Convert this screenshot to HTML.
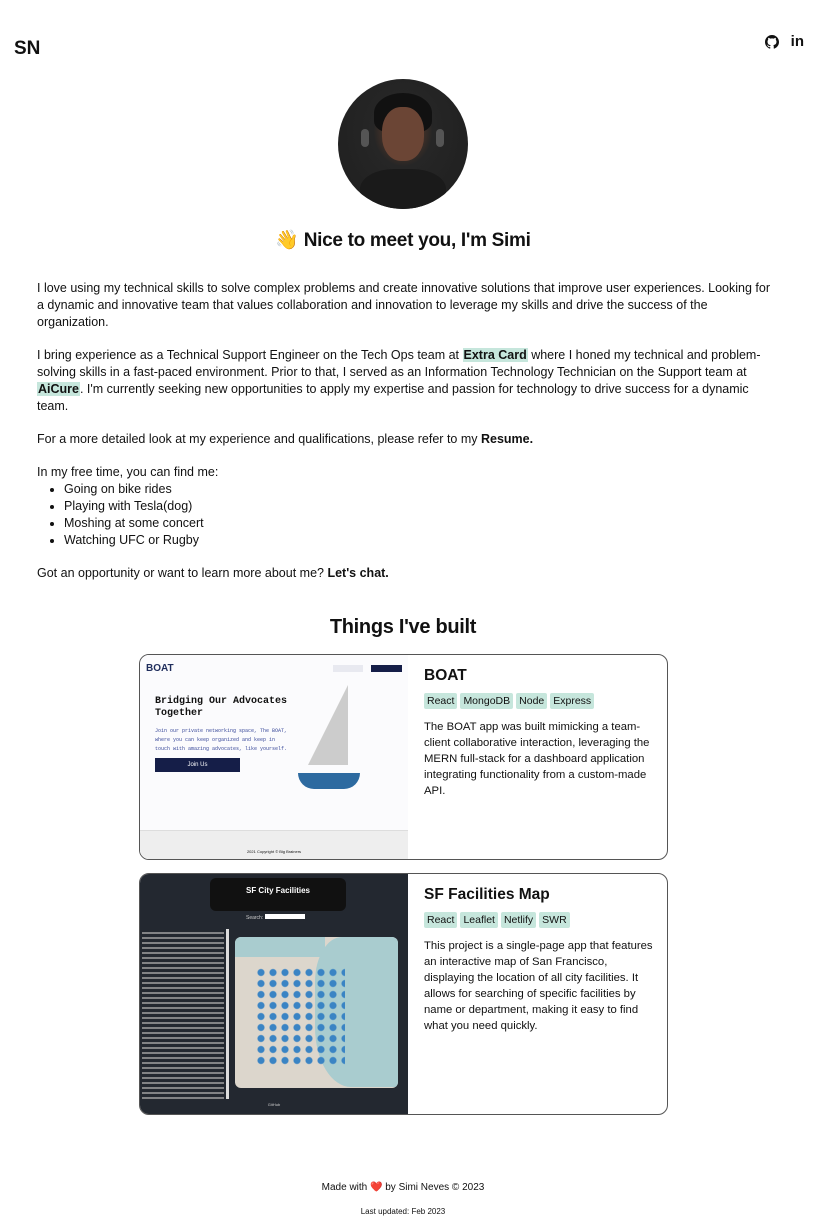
<!DOCTYPE html>
<html><head><meta charset="utf-8"><style>
*{box-sizing:border-box}
body{margin:0;width:820px;height:1230px;background:#fff;font-family:"Liberation Sans",sans-serif;color:#111;position:relative;overflow:hidden}
.logo{position:absolute;left:14px;top:38px;font-size:19px;font-weight:bold}
.icons{position:absolute;right:16px;top:33px;display:flex;gap:12px;align-items:center}
.avatar{position:absolute;left:338px;top:79px;width:130px;height:130px;border-radius:50%;background:radial-gradient(ellipse at 50% 40%,#6a4a3a 0,#4a3328 18%,#262626 32%,#1e1e1e 100%);overflow:hidden}
h1{position:absolute;left:0;width:806px;top:228px;margin:0;text-align:center;font-size:19px;font-weight:bold;letter-spacing:-0.3px}
.txt{position:absolute;left:37px;width:738px;top:280px;font-size:12.5px;line-height:17px}
.txt p{margin:0 0 16px}
.txt ul{margin:0 0 16px;padding-left:27px}
.hl{background:#c6e6dc;font-weight:bold;padding:0 1px}
h2{position:absolute;left:0;width:806px;top:616px;margin:0;text-align:center;font-size:20px;font-weight:bold;letter-spacing:-0.3px}
.card{position:absolute;left:139px;width:529px;border:1px solid #555;border-radius:10px;overflow:hidden;background:#fff}
.shot{position:absolute;left:0;top:0;bottom:0;width:268px}
.info{position:absolute;left:284px;top:12px;width:235px}
.info h3{margin:0 0 6px;font-size:15.5px}
.tags span{display:inline-block;background:#c6e6dc;font-size:10.5px;padding:2px 3px;border-radius:2px;margin-right:3px}
.info p{font-size:11.3px;line-height:16px;margin:10px 0 0}
.foot{position:absolute;left:0;width:806px;text-align:center}
</style></head><body>
<div class="logo">SN</div>
<div class="icons">
<svg width="14" height="14" viewBox="0 0 16 16"><path fill="#111" d="M8 0C3.6 0 0 3.6 0 8c0 3.5 2.3 6.5 5.5 7.6.4.1.5-.2.5-.4v-1.4c-2.2.5-2.7-1-2.7-1-.4-.9-.9-1.2-.9-1.2-.7-.5.1-.5.1-.5.8.1 1.2.8 1.2.8.7 1.2 1.9.9 2.3.7.1-.5.3-.9.5-1.1-1.8-.2-3.6-.9-3.6-4 0-.9.3-1.6.8-2.1-.1-.2-.4-1 .1-2.1 0 0 .7-.2 2.2.8.6-.2 1.3-.3 2-.3s1.4.1 2 .3c1.5-1 2.2-.8 2.2-.8.4 1.1.2 1.9.1 2.1.5.6.8 1.3.8 2.1 0 3.1-1.9 3.7-3.6 3.9.3.3.5.8.5 1.5v2.2c0 .2.1.5.6.4C13.7 14.5 16 11.5 16 8c0-4.4-3.6-8-8-8z"/></svg>
<span style="font-weight:bold;font-size:15px">in</span>
</div>
<div class="avatar">
<div style="position:absolute;left:36px;top:14px;width:58px;height:40px;border-radius:50% 50% 30% 30%;background:#111"></div>
<div style="position:absolute;left:44px;top:28px;width:42px;height:54px;border-radius:45%;background:#6b4535"></div>
<div style="position:absolute;left:22px;top:90px;width:86px;height:50px;border-radius:40% 40% 0 0;background:#1a1a1a"></div>
<div style="position:absolute;left:23px;top:50px;width:8px;height:18px;border-radius:4px;background:#555"></div>
<div style="position:absolute;left:98px;top:50px;width:8px;height:18px;border-radius:4px;background:#555"></div>
</div>
<h1>👋 Nice to meet you, I'm Simi</h1>
<div class="txt">
<p>I love using my technical skills to solve complex problems and create innovative solutions that improve user experiences. Looking for a dynamic and innovative team that values collaboration and innovation to leverage my skills and drive the success of the organization.</p>
<p>I bring experience as a Technical Support Engineer on the Tech Ops team at <span class="hl">Extra Card</span> where I honed my technical and problem-solving skills in a fast-paced environment. Prior to that, I served as an Information Technology Technician on the Support team at <span class="hl">AiCure</span>. I'm currently seeking new opportunities to apply my expertise and passion for technology to drive success for a dynamic team.</p>
<p>For a more detailed look at my experience and qualifications, please refer to my <b>Resume.</b></p>
<p style="margin:0">In my free time, you can find me:</p>
<ul><li>Going on bike rides</li><li>Playing with Tesla(dog)</li><li>Moshing at some concert</li><li>Watching UFC or Rugby</li></ul>
<p>Got an opportunity or want to learn more about me? <b>Let's chat.</b></p>
</div>
<h2>Things I've built</h2>
<div class="card" style="top:654px;height:206px">
<div class="shot" style="background:#fbfbfd">
<div style="position:absolute;left:6px;top:8px;font-weight:bold;font-size:10px;color:#1f2d5c">BOAT</div>
<div style="position:absolute;left:193px;top:10px;width:30px;height:7px;background:#e8e9f0"></div>
<div style="position:absolute;left:231px;top:10px;width:31px;height:7px;background:#151e48"></div>
<div style="position:absolute;left:15px;top:41px;font-family:'Liberation Mono',monospace;font-weight:bold;font-size:10px;line-height:12px">Bridging Our Advocates<br>Together</div>
<div style="position:absolute;left:15px;top:72px;font-family:'Liberation Mono',monospace;font-size:5px;line-height:9px;color:#3a4a9a">Join our private networking space, The BOAT,<br>where you can keep organized and keep in<br>touch with amazing advocates, like yourself.</div>
<div style="position:absolute;left:15px;top:103px;width:85px;height:14px;background:#151e48;color:#fff;font-size:6px;text-align:center;line-height:14px">Join Us</div>
<div style="position:absolute;left:168px;top:30px;width:0;height:0;border-left:40px solid transparent;border-bottom:80px solid #ccc"></div>
<div style="position:absolute;left:158px;top:118px;width:62px;height:16px;background:#2d6aa0;border-radius:0 0 30px 30px"></div>
<div style="position:absolute;left:0;top:175px;width:268px;height:30px;background:#eee;border-top:1px solid #ddd"></div>
<div style="position:absolute;left:0;top:194px;width:268px;text-align:center;font-size:4px">2021 Copyright © Big Brainers</div>
</div>
<div class="info"><h3>BOAT</h3><div class="tags"><span>React</span><span>MongoDB</span><span>Node</span><span>Express</span></div>
<p>The BOAT app was built mimicking a team-client collaborative interaction, leveraging the MERN full-stack for a dashboard application integrating functionality from a custom-made API.</p></div>
</div>
<div class="card" style="top:873px;height:242px">
<div class="shot" style="background:#232830">
<div style="position:absolute;left:70px;top:4px;width:136px;height:33px;background:#111;border-radius:6px;color:#fff;font-size:8px;font-weight:bold;text-align:center;padding-top:8px">SF City Facilities</div>
<div style="position:absolute;left:106px;top:40px;font-size:5px;color:#ccc">Search: <span style="display:inline-block;width:40px;height:5px;background:#fff"></span></div>
<div style="position:absolute;left:2px;top:55px;width:82px;height:170px;background:repeating-linear-gradient(#232830 0 3px,#aaa 3px 5px);opacity:.7"></div>
<div style="position:absolute;left:86px;top:55px;width:3px;height:170px;background:#ddd"></div>
<div style="position:absolute;left:95px;top:63px;width:163px;height:151px;border-radius:6px;background:#dcd6cc;overflow:hidden">
<div style="position:absolute;left:80px;top:0;width:90px;height:150px;background:#a9cccf;border-radius:30% 0 0 40%"></div>
<div style="position:absolute;left:0;top:0;width:90px;height:20px;background:#a9cccf"></div>
<div style="position:absolute;left:20px;top:30px;width:90px;height:100px;background:radial-gradient(circle,#3a84c4 0 3px,transparent 4px) 0 0/12px 11px"></div>
</div>
<div style="position:absolute;left:0;top:228px;width:268px;text-align:center;font-size:4px;color:#ccc">GitHub</div>
</div>
<div class="info"><h3>SF Facilities Map</h3><div class="tags"><span>React</span><span>Leaflet</span><span>Netlify</span><span>SWR</span></div>
<p>This project is a single-page app that features an interactive map of San Francisco, displaying the location of all city facilities. It allows for searching of specific facilities by name or department, making it easy to find what you need quickly.</p></div>
</div>
<div class="foot" style="top:1182px;font-size:10px">Made with ❤️ by Simi Neves © 2023</div>
<div class="foot" style="top:1207px;font-size:8px">Last updated: Feb 2023</div>
</body></html>
